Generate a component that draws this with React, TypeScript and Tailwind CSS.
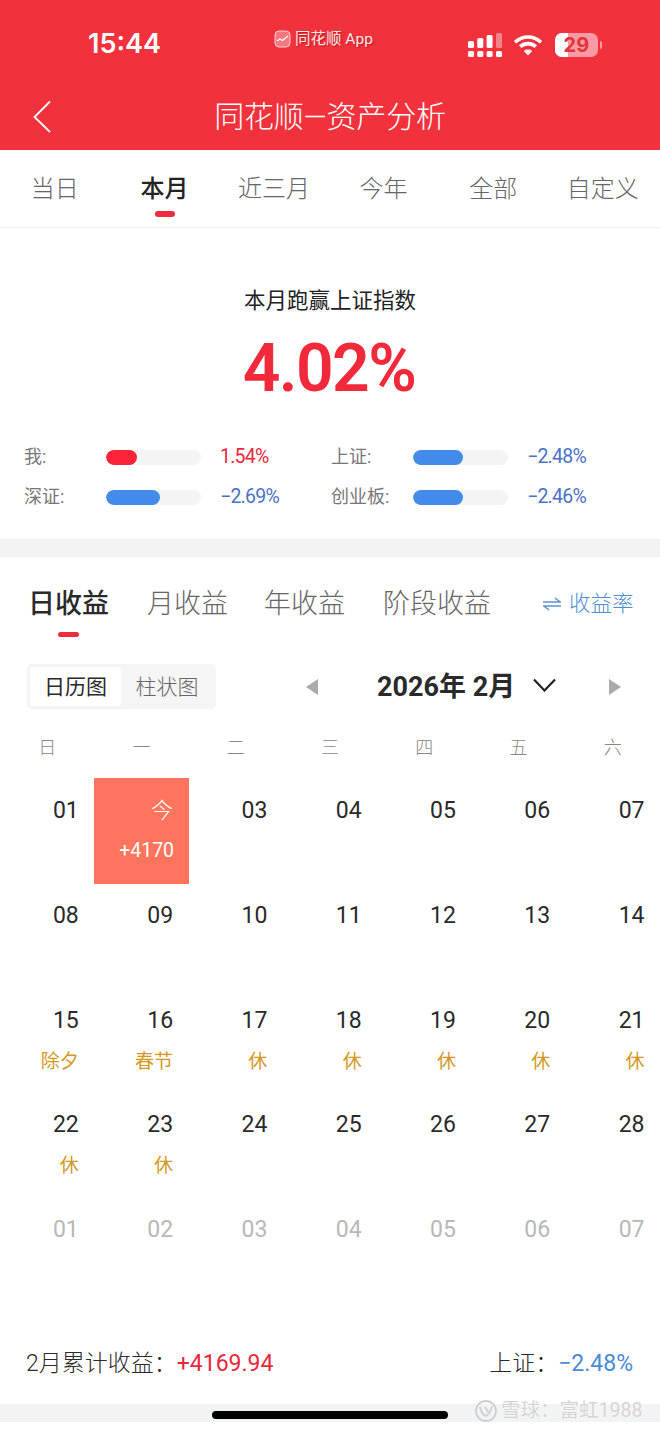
import React from "react";

const CJK = "font-['Roboto','Noto_Sans_CJK_SC',sans-serif]";

const tabs = ["当日", "本月", "近三月", "今年", "全部", "自定义"];
const weekdays = ["日", "一", "二", "三", "四", "五", "六"];
type Cell = { d: string; sub?: string; today?: boolean; muted?: boolean };
const rows: Cell[][] = [
  [{ d: "01" }, { d: "今", sub: "+4170", today: true }, { d: "03" }, { d: "04" }, { d: "05" }, { d: "06" }, { d: "07" }],
  [{ d: "08" }, { d: "09" }, { d: "10" }, { d: "11" }, { d: "12" }, { d: "13" }, { d: "14" }],
  [{ d: "15", sub: "除夕" }, { d: "16", sub: "春节" }, { d: "17", sub: "休" }, { d: "18", sub: "休" }, { d: "19", sub: "休" }, { d: "20", sub: "休" }, { d: "21", sub: "休" }],
  [{ d: "22", sub: "休" }, { d: "23", sub: "休" }, { d: "24" }, { d: "25" }, { d: "26" }, { d: "27" }, { d: "28" }],
  ["01", "02", "03", "04", "05", "06", "07"].map((d) => ({ d, muted: true })),
];

function Signal() {
  return (
    <svg width="34" height="24" viewBox="0 0 34 24" fill="#fff">
      <rect x="0" y="8" width="6" height="7" rx="1.5" />
      <rect x="9.3" y="5" width="6" height="10" rx="1.5" />
      <rect x="18.6" y="2" width="6" height="13" rx="1.5" />
      <rect x="28" y="0" width="6" height="15" rx="1.5" opacity="0.4" />
      <rect x="0" y="18" width="6" height="6" rx="1.5" />
      <rect x="9.3" y="18" width="6" height="6" rx="1.5" />
      <rect x="18.6" y="18" width="6" height="6" rx="1.5" />
      <rect x="28" y="18" width="6" height="6" rx="1.5" />
    </svg>
  );
}

function Wifi() {
  return (
    <svg width="30" height="22" viewBox="0 0 30 22" fill="none" stroke="#fff" strokeWidth="3.6">
      <path d="M2 8.2C9.5 1.2 20.5 1.2 28 8.2" />
      <path d="M7.2 12.6C11.8 8.6 18.2 8.6 22.8 12.6" />
      <path d="M15 21.5l-4.2-4.6c2.4-1.9 6-1.9 8.4 0z" fill="#fff" stroke="none" />
    </svg>
  );
}

function Battery() {
  return (
    <div className="flex items-center gap-[2px]">
      <div className="relative flex h-[24px] w-[43px] items-center justify-center overflow-hidden rounded-[7px] bg-[#fb9aa2]">
        <div className="absolute left-0 top-0 h-full w-[13px] bg-white" />
        <span className="relative font-['Inter',sans-serif] text-[20px] font-bold leading-none text-[#e0343f]">29</span>
      </div>
      <div className="h-[8px] w-[2px] rounded-r bg-[#fb9aa2]" />
    </div>
  );
}

function Compare({ label, pct, value, color, textColor, w }: { label: string; pct: number; value: string; color: string; textColor: string; w: string }) {
  return (
    <div className={`flex items-center ${w}`}>
      <span className="w-[82px] text-[18px] leading-[24px] text-[#777]">{label}</span>
      <div className="h-[15px] w-[95px] overflow-hidden rounded-full bg-[#f3f4f4]">
        <div className={`h-full rounded-full ${color}`} style={{ width: `${pct}%` }} />
      </div>
      <span className={`ml-[19px] text-[19.5px] leading-[24px] tracking-[-0.75px] ${textColor}`}>{value}</span>
    </div>
  );
}

function dateClass(c: Cell) {
  if (c.today) return "text-[22px] leading-[32px] font-light text-white";
  if (c.muted) return "text-[23px] leading-[32px] text-[#b8b8b8]";
  return "text-[23px] leading-[32px] text-[#2a2a2a]";
}

export default function App() {
  return (
    <div className={`relative flex h-[1431px] w-[660px] flex-col overflow-hidden bg-white ${CJK}`}>
      <header className="h-[150px] bg-[#f1313c] text-white">
        <div className="flex h-[82px] items-start">
          <span className="ml-[88px] mt-[27px] font-['Inter',sans-serif] text-[27px] font-semibold leading-[34px]">15:44</span>
          <div className="ml-[113px] mt-[29px] flex items-center gap-[4px]">
            <svg width="17" height="18" viewBox="0 0 17 18" fill="none">
              <rect x="1" y="1" width="15" height="16" rx="4" fill="#f8767e" stroke="#fbd0d2" strokeWidth="1" />
              <path d="M3 11l3-2 2.5 1.5L14 6" stroke="#fff" strokeWidth="1.3" />
            </svg>
            <span className="text-[15.5px] leading-[20px] text-[#ffe9ea] [text-shadow:1px_1px_1px_rgba(120,0,0,0.45)]">同花顺 App</span>
          </div>
          <div className="ml-[95px] mt-[33px] flex items-center">
            <Signal />
            <div className="ml-[11px]"><Wifi /></div>
            <div className="ml-[12px]"><Battery /></div>
          </div>
        </div>
        <div className="relative flex h-[68px] items-center justify-center pt-[2px]">
          <svg className="absolute left-[32px] top-[18px]" width="20" height="33" viewBox="0 0 20 33" fill="none" stroke="#fff" strokeWidth="1.8">
            <path d="M18 1.5L2.5 17 18 32" />
          </svg>
          <span className="text-[30px] font-light leading-[40px] tracking-[-0.2px]">同花顺—资产分析</span>
        </div>
      </header>

      <nav className="grid h-[78px] grid-cols-6 border-b border-[#eeeeee] pr-[2.4px]">
        {tabs.map((t) => (
          <div key={t} className="relative flex items-center justify-center">
            <span className={t === "本月" ? "text-[24px] font-medium leading-[34px] text-[#222]" : "text-[24px] font-light leading-[34px] text-[#666]"}>{t}</span>
            {t === "本月" && <div className="absolute bottom-[10px] left-[45px] h-[6px] w-[20px] rounded-full bg-[#ee2b3f]" />}
          </div>
        ))}
      </nav>

      <section className="flex h-[311px] flex-col items-center">
        <div className="mt-[57px] text-[21.5px] leading-[32px] text-[#222]">本月跑赢上证指数</div>
        <div className="mt-[16px] pr-[2px] font-['Roboto',sans-serif] text-[66px] font-semibold leading-[72px] tracking-[-1.6px] text-[#f12a3b]">4.02%</div>
        <div className="mt-[40px] flex w-full flex-wrap gap-y-[16px] pl-[24px]">
          <Compare label="我:" pct={33} value="1.54%" color="bg-[#fb2438]" textColor="text-[#e8283c]" w="w-[307px]" />
          <Compare label="上证:" pct={53} value="−2.48%" color="bg-[#428bea]" textColor="text-[#4a72c4]" w="w-[320px]" />
          <Compare label="深证:" pct={57} value="−2.69%" color="bg-[#428bea]" textColor="text-[#4a72c4]" w="w-[307px]" />
          <Compare label="创业板:" pct={53} value="−2.46%" color="bg-[#428bea]" textColor="text-[#4a72c4]" w="w-[320px]" />
        </div>
      </section>

      <div className="h-[18px] bg-[#f2f3f5]" />

      <section className="flex flex-1 flex-col">
        <div className="relative flex h-[107px] items-center pb-[13px] pl-[28px]">
          <span className="text-[27px] font-medium leading-[38px] text-[#2a2a2a]">日收益</span>
          <span className="ml-[38px] text-[27px] font-light leading-[38px] text-[#666]">月收益</span>
          <span className="ml-[36px] text-[27px] font-light leading-[38px] text-[#666]">年收益</span>
          <span className="ml-[38px] text-[27px] font-light leading-[38px] text-[#666]">阶段收益</span>
          <div className="absolute bottom-[27px] left-[58px] h-[5px] w-[21px] rounded-full bg-[#ee2b3f]" />
          <svg className="ml-[52px]" width="18" height="14" viewBox="0 0 18 14" fill="none" stroke="#5b95d0" strokeWidth="1.5">
            <path d="M0 5h17L12 1M18 9H1l5 4" />
          </svg>
          <span className="ml-[8px] text-[21.5px] font-light leading-[30px] text-[#4f8fd0]">收益率</span>
        </div>

        <div className="flex h-[45px] items-center">
          <div className="ml-[27px] flex h-[45px] w-[189px] rounded-[5px] bg-[#f5f5f5] p-[3px]">
            <div className="flex w-[91px] items-center justify-center rounded-[3px] bg-white text-[21px] leading-[30px] text-[#2a2a2a]">日历图</div>
            <div className="flex flex-1 items-center justify-center text-[21px] font-light leading-[30px] text-[#666]">柱状图</div>
          </div>
          <svg className="ml-[90px]" width="12" height="16" viewBox="0 0 12 16" fill="#aaa"><path d="M12 0v16L0 8z" /></svg>
          <span className="ml-[59px] text-[27px] font-bold leading-[38px] text-[#2a2a2a]">2026年 2月</span>
          <svg className="ml-[18px] mb-[3px]" width="23" height="14" viewBox="0 0 23 14" fill="none" stroke="#222" strokeWidth="2.2"><path d="M1 1.5l10.5 11L22 1.5" /></svg>
          <svg className="ml-[53px]" width="12" height="16" viewBox="0 0 12 16" fill="#aaa"><path d="M0 0v16l12-8z" /></svg>
        </div>

        <div className="mt-[24px] grid h-[30px] grid-cols-7">
          {weekdays.map((w) => (
            <div key={w} className="text-center text-[18px] font-light leading-[30px] text-[#888]">{w}</div>
          ))}
        </div>

        <div className="mt-[15px] flex flex-col">
          {rows.map((row, i) => (
            <div key={i} className="grid h-[104.8px] grid-cols-7">
              {row.map((c, j) => (
                <div key={j} className={`flex h-[106px] flex-col items-end pr-[15.5px] pt-[17px] ${c.today ? "bg-[#ff745c]" : ""}`}>
                  <span className={dateClass(c)}>{c.d}</span>
                  {c.sub && (
                    <span className={c.today ? "-mr-[1px] mt-[10px] text-[19.5px] leading-[28px] text-white" : "mt-[11px] text-[19px] leading-[28px] text-[#d4971f]"}>{c.sub}</span>
                  )}
                </div>
              ))}
            </div>
          ))}
        </div>

        <div className="mt-auto flex h-[32px] items-center justify-between pl-[26px] pr-[27px] text-[23px] leading-[32px]">
          <div className="flex items-center font-light text-[#2a2a2a]">
            <span>2月累计收益：</span>
            <span className="font-normal text-[#e8283c]">+4169.94</span>
          </div>
          <div className="flex items-center font-light text-[#2a2a2a]">
            <span>上证：</span>
            <span className="font-normal text-[#4a8ad8]">−2.48%</span>
          </div>
        </div>
        <div className="mt-[24px] h-[18px] bg-[#f2f3f5]" />
        <div className="h-[9px]" />
      </section>

      <div className="absolute left-[212px] top-[1411px] h-[8px] w-[236px] rounded-full bg-black" />
      <div className="absolute left-[474px] top-[1397px] flex items-center gap-[3px] text-[19.5px] leading-[28px] text-[#d4d4d4] [text-shadow:0_0_2px_#fff]">
        <svg width="24" height="24" viewBox="0 0 24 24" fill="none" stroke="#cfcfcf" strokeWidth="1.8">
          <circle cx="12" cy="12" r="10" />
          <path d="M6 8c1 5 3 8 6 9 3-2 5-5 6-10M11 8l3 5" />
        </svg>
        <span>雪球：富虹1988</span>
      </div>
    </div>
  );
}
